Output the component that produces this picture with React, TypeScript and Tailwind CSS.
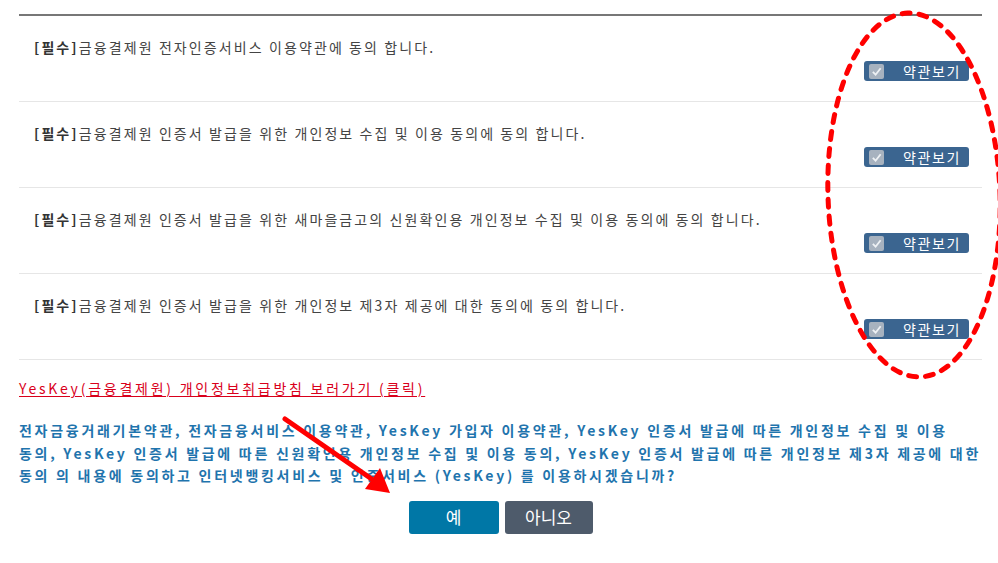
const terms = [
  '금융결제원 전자인증서비스 이용약관에 동의 합니다.',
  '금융결제원 인증서 발급을 위한 개인정보 수집 및 이용 동의에 동의 합니다.',
  '금융결제원 인증서 발급을 위한 새마을금고의 신원확인용 개인정보 수집 및 이용 동의에 동의 합니다.',
  '금융결제원 인증서 발급을 위한 개인정보 제3자 제공에 대한 동의에 동의 합니다.',
];

function ViewButton() {
  return (
    <div className="flex h-[20px] w-[105px] items-center rounded-[3px] bg-[#3b6590] pl-[5px]">
      <span className="flex h-[15px] w-[15px] items-center justify-center rounded-[2px] bg-[#a7b2bf]">
        <svg width="11" height="11" viewBox="0 0 12 12">
          <path d="M2 6.5 L5 9.5 L10.5 2.5" fill="none" stroke="#eef1f4" strokeWidth="2" />
        </svg>
      </span>
      <span className="ml-[19px] text-[14px] leading-none tracking-[1.6px] text-white">약관보기</span>
    </div>
  );
}

function TermRow({ text }: { text: string }) {
  return (
    <div className="flex h-[86px] flex-col border-b border-[#e6e6e6]">
      <div className="mt-[22px] pl-[15px] text-[14px] leading-[18px] tracking-[2.1px] text-[#444]">
        <b className="text-[#333]">[필수]</b>
        {text}
      </div>
      <div className="mr-[13px] mt-[5px] flex justify-end">
        <ViewButton />
      </div>
    </div>
  );
}

export default function App() {
  return (
    <div
      className="relative h-[563px] w-[998px] overflow-hidden bg-white"
      style={{ fontFamily: '"Noto Sans CJK KR", "Noto Sans", sans-serif' }}
    >
      <div className="ml-[19px] w-[963px] pt-[14px]">
        <div className="border-t-2 border-[#777]" />
        {terms.map((t) => (
          <TermRow key={t} text={t} />
        ))}

        <div className="mt-[18px] text-[14px] leading-[20px] tracking-[2.75px] text-[#d9001b] underline underline-offset-2">
          YesKey(금융결제원) 개인정보취급방침 보러가기 (클릭)
        </div>

        <p className="mt-[21px] whitespace-nowrap text-[14px] font-bold leading-[22.5px] tracking-[2.72px] text-[#1f74ad]">
          전자금융거래기본약관, 전자금융서비스 이용약관, YesKey 가입자 이용약관, YesKey 인증서 발급에 따른 개인정보 수집 및 이용
          <br />
          동의, YesKey 인증서 발급에 따른 신원확인용 개인정보 수집 및 이용 동의, YesKey 인증서 발급에 따른 개인정보 제3자 제공에 대한
          <br />
          동의 의 내용에 동의하고 인터넷뱅킹서비스 및 인증서비스 (YesKey) 를 이용하시겠습니까?
        </p>

        <div className="mt-[14px] flex justify-center gap-[6px]">
          <button className="h-[33px] w-[90px] rounded-[3px] bg-[#0077a6] text-[17px] text-white">예</button>
          <button className="h-[33px] w-[88px] rounded-[3px] bg-[#4e5b6b] text-[17px] text-white">아니오</button>
        </div>
      </div>

      {/* red annotations drawn over the page */}
      <svg className="pointer-events-none absolute left-0 top-0" width="998" height="563">
        <ellipse
          cx="914"
          cy="195"
          rx="86"
          ry="182"
          transform="rotate(-2 914 195)"
          fill="none"
          stroke="#ff0000"
          strokeWidth="5"
          strokeDasharray="8 9"
          strokeLinecap="round"
        />
        <line x1="285" y1="419" x2="376" y2="482" stroke="#ff0000" strokeWidth="5" strokeLinecap="round" />
        <polygon points="390,493 365,489 380,468" fill="#ff0000" />
      </svg>
    </div>
  );
}
